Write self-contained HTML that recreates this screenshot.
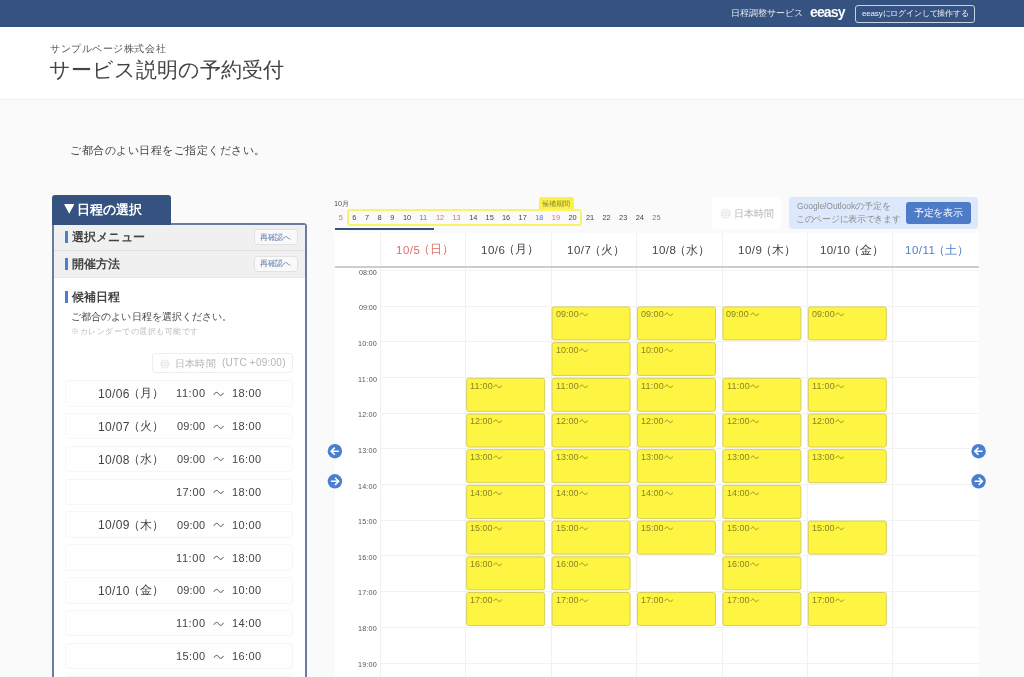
<!DOCTYPE html>
<html lang="ja"><head><meta charset="utf-8"><title>サービス説明の予約受付</title>
<style>
*{box-sizing:border-box;margin:0;padding:0}
html,body{width:1024px;height:677px;overflow:hidden}
body{position:relative;background:#fafafa;font-family:"Liberation Sans",sans-serif;color:#444}
#w{position:absolute;left:0;top:0;width:1024px;height:677px;overflow:hidden;will-change:transform}
.a{position:absolute;white-space:nowrap;line-height:1}
.cc{transform:translate(-50%,-50%)}
</style></head>
<body>
<div id="w">
<div class="a" style="left:0px;top:0px;width:1024px;height:27px;background:#365281"></div>
<div class="a" style="left:731px;top:9px;font-size:9px;color:#e4e9f1;letter-spacing:-0.03px">日程調整サービス</div>
<div class="a" style="left:810px;top:5px;font-size:14px;color:#fff;letter-spacing:-0.85px;font-weight:bold">eeasy</div>
<div class="a" style="left:855.4px;top:4.5px;width:119.5px;height:18px;border:1px solid #c9d2e0;border-radius:3px"></div>
<div class="a" style="left:862px;top:10px;font-size:8px;color:#eef1f6;letter-spacing:-0.16px">eeasyにログインして操作する</div>
<div class="a" style="left:0px;top:27px;width:1024px;height:73px;background:#fff;border-bottom:1px solid #eee"></div>
<div class="a" style="left:50px;top:44px;font-size:10px;color:#555;letter-spacing:0.56px">サンプルページ株式会社</div>
<div class="a" style="left:49px;top:59px;font-size:21px;color:#444;letter-spacing:-0.04px">サービス説明の予約受付</div>
<div class="a" style="left:70px;top:145px;font-size:11px;color:#444;letter-spacing:0.53px">ご都合のよい日程をご指定ください。</div>
<div class="a" style="left:52px;top:223px;width:255px;height:470px;background:#fff;border:2px solid #687da0;border-radius:0 3.5px 0 0"></div>
<div class="a" style="left:52px;top:195.3px;width:119px;height:29.7px;background:#365281;border-radius:3px 3px 0 0"></div>
<svg class="a" style="left:64px;top:204px" width="10.4" height="9.8" viewBox="0 0 10.4 9.8"><path d="M0 0H10.4L5.2 9.8Z" fill="#fff"/></svg>
<div class="a" style="left:77px;top:203px;font-size:13px;color:#fff;letter-spacing:-0.05px;font-weight:bold">日程の選択</div>
<div class="a" style="left:54px;top:225px;width:251px;height:25.5px;background:#f0f0f0;border-bottom:1px solid #e0e0e0"></div>
<div class="a" style="left:54px;top:250.5px;width:251px;height:27.3px;background:#f0f0f0;border-bottom:1px solid #e8e8e8"></div>
<div class="a" style="left:65.3px;top:231px;width:2.8px;height:12px;background:#4a7fd0"></div>
<div class="a" style="left:72px;top:231px;font-size:12px;color:#444;letter-spacing:0.16px;font-weight:bold">選択メニュー</div>
<div class="a" style="left:65.3px;top:257.6px;width:2.8px;height:12px;background:#4a7fd0"></div>
<div class="a" style="left:72px;top:258px;font-size:12px;color:#444;letter-spacing:0.06px;font-weight:bold">開催方法</div>
<div class="a" style="left:65.3px;top:291.4px;width:2.8px;height:12px;background:#4a7fd0"></div>
<div class="a" style="left:72px;top:291px;font-size:12px;color:#444;letter-spacing:0.06px;font-weight:bold">候補日程</div>
<div class="a" style="left:254.2px;top:228.8px;width:43.6px;height:16.6px;background:#f9f9f9;border:1px solid #e2e2e2;border-radius:3px"></div>
<div class="a" style="left:260px;top:234px;font-size:8px;color:#5a79a8;letter-spacing:-0.36px">再確認へ</div>
<div class="a" style="left:254.2px;top:255.6px;width:43.6px;height:16.6px;background:#f9f9f9;border:1px solid #e2e2e2;border-radius:3px"></div>
<div class="a" style="left:260px;top:260px;font-size:8px;color:#5a79a8;letter-spacing:-0.36px">再確認へ</div>
<div class="a" style="left:71px;top:312px;font-size:10px;color:#444;letter-spacing:0.10px">ご都合のよい日程を選択ください。</div>
<div class="a" style="left:71px;top:328px;font-size:8px;color:#bbb;letter-spacing:0.53px">※カレンダーでの選択も可能です</div>
<div class="a" style="left:152.4px;top:353.4px;width:140.6px;height:19.3px;border:1px solid #eee;border-radius:3px;background:#fff"></div>
<svg class="a" style="left:159.8px;top:358.5px" width="10" height="10" viewBox="0 0 20 20"><circle cx="10" cy="10" r="9" fill="#e4e4e4"/><g fill="none" stroke="#fff" stroke-width="1.2"><ellipse cx="10" cy="10" rx="4" ry="9"/><path d="M1 10H19M10 1V19M2.5 5.5H17.5M2.5 14.5H17.5"/></g></svg>
<div class="a" style="left:175px;top:359px;font-size:10px;color:#b4b4b4;letter-spacing:0.24px">日本時間</div>
<div class="a" style="left:222px;top:358px;font-size:10px;color:#b4b4b4;letter-spacing:0.24px">(UTC +09:00)</div>
<div class="a" style="left:65px;top:380.00px;width:228px;height:26.5px;border:1px solid #f6f6f6;border-radius:3px;background:#fefefe"></div>
<div class="a" style="left:98px;top:388px;font-size:12px;color:#444;letter-spacing:0.33px">10/06</div>
<div class="a" style="left:128px;top:388px;font-size:11.5px;color:#444">（月）</div>
<div class="a" style="left:176px;top:388px;font-size:11px;color:#444;letter-spacing:0.59px">11:00</div>
<svg class="a" style="left:213.3px;top:390.8px" width="11.4" height="5.7" viewBox="0 0 17 9"><path d="M1 6C3.4 1.2 6.4 1.2 8.5 4.5S13.6 7.8 16 3" fill="none" stroke="#444" stroke-width="1.4912280701754386"/></svg>
<div class="a" style="left:232px;top:388px;font-size:11px;color:#444;letter-spacing:0.37px">18:00</div>
<div class="a" style="left:65px;top:412.85px;width:228px;height:26.5px;border:1px solid #f6f6f6;border-radius:3px;background:#fefefe"></div>
<div class="a" style="left:98px;top:421px;font-size:12px;color:#444;letter-spacing:0.33px">10/07</div>
<div class="a" style="left:128px;top:421px;font-size:11.5px;color:#444">（火）</div>
<div class="a" style="left:177px;top:421px;font-size:11px;color:#444;letter-spacing:0.14px">09:00</div>
<svg class="a" style="left:213.3px;top:423.6px" width="11.4" height="5.7" viewBox="0 0 17 9"><path d="M1 6C3.4 1.2 6.4 1.2 8.5 4.5S13.6 7.8 16 3" fill="none" stroke="#444" stroke-width="1.4912280701754386"/></svg>
<div class="a" style="left:232px;top:421px;font-size:11px;color:#444;letter-spacing:0.37px">18:00</div>
<div class="a" style="left:65px;top:445.70px;width:228px;height:26.5px;border:1px solid #f6f6f6;border-radius:3px;background:#fefefe"></div>
<div class="a" style="left:98px;top:454px;font-size:12px;color:#444;letter-spacing:0.33px">10/08</div>
<div class="a" style="left:128px;top:454px;font-size:11.5px;color:#444">（水）</div>
<div class="a" style="left:177px;top:454px;font-size:11px;color:#444;letter-spacing:0.14px">09:00</div>
<svg class="a" style="left:213.3px;top:456.4px" width="11.4" height="5.7" viewBox="0 0 17 9"><path d="M1 6C3.4 1.2 6.4 1.2 8.5 4.5S13.6 7.8 16 3" fill="none" stroke="#444" stroke-width="1.4912280701754386"/></svg>
<div class="a" style="left:232px;top:454px;font-size:11px;color:#444;letter-spacing:0.37px">16:00</div>
<div class="a" style="left:65px;top:478.55px;width:228px;height:26.5px;border:1px solid #f6f6f6;border-radius:3px;background:#fefefe"></div>
<div class="a" style="left:176px;top:487px;font-size:11px;color:#444;letter-spacing:0.37px">17:00</div>
<svg class="a" style="left:213.3px;top:489.3px" width="11.4" height="5.7" viewBox="0 0 17 9"><path d="M1 6C3.4 1.2 6.4 1.2 8.5 4.5S13.6 7.8 16 3" fill="none" stroke="#444" stroke-width="1.4912280701754386"/></svg>
<div class="a" style="left:232px;top:487px;font-size:11px;color:#444;letter-spacing:0.37px">18:00</div>
<div class="a" style="left:65px;top:511.40px;width:228px;height:26.5px;border:1px solid #f6f6f6;border-radius:3px;background:#fefefe"></div>
<div class="a" style="left:98px;top:519px;font-size:12px;color:#444;letter-spacing:0.33px">10/09</div>
<div class="a" style="left:128px;top:520px;font-size:11.5px;color:#444">（木）</div>
<div class="a" style="left:177px;top:520px;font-size:11px;color:#444;letter-spacing:0.14px">09:00</div>
<svg class="a" style="left:213.3px;top:522.1px" width="11.4" height="5.7" viewBox="0 0 17 9"><path d="M1 6C3.4 1.2 6.4 1.2 8.5 4.5S13.6 7.8 16 3" fill="none" stroke="#444" stroke-width="1.4912280701754386"/></svg>
<div class="a" style="left:232px;top:520px;font-size:11px;color:#444;letter-spacing:0.37px">10:00</div>
<div class="a" style="left:65px;top:544.25px;width:228px;height:26.5px;border:1px solid #f6f6f6;border-radius:3px;background:#fefefe"></div>
<div class="a" style="left:176px;top:553px;font-size:11px;color:#444;letter-spacing:0.59px">11:00</div>
<svg class="a" style="left:213.3px;top:555.0px" width="11.4" height="5.7" viewBox="0 0 17 9"><path d="M1 6C3.4 1.2 6.4 1.2 8.5 4.5S13.6 7.8 16 3" fill="none" stroke="#444" stroke-width="1.4912280701754386"/></svg>
<div class="a" style="left:232px;top:553px;font-size:11px;color:#444;letter-spacing:0.37px">18:00</div>
<div class="a" style="left:65px;top:577.10px;width:228px;height:26.5px;border:1px solid #f6f6f6;border-radius:3px;background:#fefefe"></div>
<div class="a" style="left:98px;top:585px;font-size:12px;color:#444;letter-spacing:0.33px">10/10</div>
<div class="a" style="left:128px;top:585px;font-size:11.5px;color:#444">（金）</div>
<div class="a" style="left:177px;top:585px;font-size:11px;color:#444;letter-spacing:0.14px">09:00</div>
<svg class="a" style="left:213.3px;top:587.8px" width="11.4" height="5.7" viewBox="0 0 17 9"><path d="M1 6C3.4 1.2 6.4 1.2 8.5 4.5S13.6 7.8 16 3" fill="none" stroke="#444" stroke-width="1.4912280701754386"/></svg>
<div class="a" style="left:232px;top:585px;font-size:11px;color:#444;letter-spacing:0.37px">10:00</div>
<div class="a" style="left:65px;top:609.95px;width:228px;height:26.5px;border:1px solid #f6f6f6;border-radius:3px;background:#fefefe"></div>
<div class="a" style="left:176px;top:618px;font-size:11px;color:#444;letter-spacing:0.59px">11:00</div>
<svg class="a" style="left:213.3px;top:620.7px" width="11.4" height="5.7" viewBox="0 0 17 9"><path d="M1 6C3.4 1.2 6.4 1.2 8.5 4.5S13.6 7.8 16 3" fill="none" stroke="#444" stroke-width="1.4912280701754386"/></svg>
<div class="a" style="left:232px;top:618px;font-size:11px;color:#444;letter-spacing:0.37px">14:00</div>
<div class="a" style="left:65px;top:642.80px;width:228px;height:26.5px;border:1px solid #f6f6f6;border-radius:3px;background:#fefefe"></div>
<div class="a" style="left:176px;top:651px;font-size:11px;color:#444;letter-spacing:0.37px">15:00</div>
<svg class="a" style="left:213.3px;top:653.5px" width="11.4" height="5.7" viewBox="0 0 17 9"><path d="M1 6C3.4 1.2 6.4 1.2 8.5 4.5S13.6 7.8 16 3" fill="none" stroke="#444" stroke-width="1.4912280701754386"/></svg>
<div class="a" style="left:232px;top:651px;font-size:11px;color:#444;letter-spacing:0.37px">16:00</div>
<div class="a" style="left:65px;top:675.65px;width:228px;height:26.5px;border:1px solid #f6f6f6;border-radius:3px;background:#fefefe"></div>
<div class="a" style="left:334px;top:200px;font-size:7.4px;color:#555">10月</div>
<div class="a" style="left:539px;top:197px;width:35px;height:13.5px;background:#fbf14a;border-radius:2px 2px 0 0"></div>
<div class="a" style="left:542px;top:200px;font-size:7px;color:#8a8330;letter-spacing:0.12px">候補期間</div>
<div class="a" style="left:346.8px;top:209px;width:235.6px;height:16.6px;border:2px solid #f9f36a;border-radius:3.5px"></div>
<div class="a cc" style="left:340.9px;top:217.8px;font-size:7.4px;color:#d8706c">5</div>
<div class="a cc" style="left:354.4px;top:217.8px;font-size:7.4px;color:#444">6</div>
<div class="a cc" style="left:367px;top:217.8px;font-size:7.4px;color:#444">7</div>
<div class="a cc" style="left:379.6px;top:217.8px;font-size:7.4px;color:#444">8</div>
<div class="a cc" style="left:392.3px;top:217.8px;font-size:7.4px;color:#444">9</div>
<div class="a cc" style="left:407px;top:217.8px;font-size:7.4px;color:#444">10</div>
<div class="a cc" style="left:423.3px;top:217.8px;font-size:7.4px;color:#4a7fd0">11</div>
<div class="a cc" style="left:440px;top:217.8px;font-size:7.4px;color:#d8706c">12</div>
<div class="a cc" style="left:456.5px;top:217.8px;font-size:7.4px;color:#d8706c">13</div>
<div class="a cc" style="left:473.3px;top:217.8px;font-size:7.4px;color:#444">14</div>
<div class="a cc" style="left:489.7px;top:217.8px;font-size:7.4px;color:#444">15</div>
<div class="a cc" style="left:506px;top:217.8px;font-size:7.4px;color:#444">16</div>
<div class="a cc" style="left:522.7px;top:217.8px;font-size:7.4px;color:#444">17</div>
<div class="a cc" style="left:539.3px;top:217.8px;font-size:7.4px;color:#4a7fd0">18</div>
<div class="a cc" style="left:555.9px;top:217.8px;font-size:7.4px;color:#d8706c">19</div>
<div class="a cc" style="left:572.5px;top:217.8px;font-size:7.4px;color:#444">20</div>
<div class="a cc" style="left:590px;top:217.8px;font-size:7.4px;color:#444">21</div>
<div class="a cc" style="left:606.6px;top:217.8px;font-size:7.4px;color:#444">22</div>
<div class="a cc" style="left:623.2px;top:217.8px;font-size:7.4px;color:#444">23</div>
<div class="a cc" style="left:639.8px;top:217.8px;font-size:7.4px;color:#444">24</div>
<div class="a cc" style="left:656.4px;top:217.8px;font-size:7.4px;color:#4a7fd0">25</div>
<div class="a" style="left:334.8px;top:228px;width:99.6px;height:2px;background:#365281"></div>
<div class="a" style="left:711.7px;top:197.3px;width:69.8px;height:31.7px;background:#fff;border-radius:4px"></div>
<svg class="a" style="left:719.5px;top:207.7px" width="11.4" height="11.4" viewBox="0 0 20 20"><circle cx="10" cy="10" r="9" fill="#e4e4e4"/><g fill="none" stroke="#fff" stroke-width="1.2"><ellipse cx="10" cy="10" rx="4" ry="9"/><path d="M1 10H19M10 1V19M2.5 5.5H17.5M2.5 14.5H17.5"/></g></svg>
<div class="a" style="left:734px;top:209px;font-size:10px;color:#b4b4b4;letter-spacing:0.12px">日本時間</div>
<div class="a" style="left:789.4px;top:197.3px;width:189px;height:32.2px;background:#dce8fc;border-radius:4px"></div>
<div class="a" style="left:797px;top:202px;font-size:8.5px;color:#8e8e8e;letter-spacing:-0.06px">Google/Outlookの予定を</div>
<div class="a" style="left:796px;top:215px;font-size:8.5px;color:#8e8e8e;letter-spacing:-0.29px">このページに表示できます</div>
<div class="a" style="left:906px;top:202.3px;width:65.3px;height:22px;background:#4d7bc8;border-radius:3px"></div>
<div class="a" style="left:914px;top:208px;font-size:10px;color:#fff;letter-spacing:-0.26px">予定を表示</div>
<div class="a" style="left:334.8px;top:233px;width:644.2px;height:460px;background:#fff"></div>
<div class="a" style="left:380.00px;top:233px;width:1px;height:460px;background:#f1f1f1"></div>
<div class="a" style="left:465.40px;top:233px;width:1px;height:460px;background:#f1f1f1"></div>
<div class="a" style="left:550.80px;top:233px;width:1px;height:460px;background:#f1f1f1"></div>
<div class="a" style="left:636.20px;top:233px;width:1px;height:460px;background:#f1f1f1"></div>
<div class="a" style="left:721.60px;top:233px;width:1px;height:460px;background:#f1f1f1"></div>
<div class="a" style="left:807.00px;top:233px;width:1px;height:460px;background:#f1f1f1"></div>
<div class="a" style="left:892.40px;top:233px;width:1px;height:460px;background:#f1f1f1"></div>
<div class="a" style="left:334.8px;top:266.2px;width:644.2px;height:2px;background:#ccc"></div>
<div class="a" style="left:396px;top:245px;font-size:11.5px;color:#d8706c;letter-spacing:0.54px">10/5</div>
<div class="a" style="left:418px;top:244px;font-size:11.5px;color:#d8706c">（日）</div>
<div class="a" style="left:481px;top:245px;font-size:11.5px;color:#444;letter-spacing:0.54px">10/6</div>
<div class="a" style="left:503px;top:244px;font-size:11.5px;color:#444">（月）</div>
<div class="a" style="left:567px;top:245px;font-size:11.5px;color:#444;letter-spacing:0.54px">10/7</div>
<div class="a" style="left:589px;top:245px;font-size:11.5px;color:#444">（火）</div>
<div class="a" style="left:652px;top:245px;font-size:11.5px;color:#444;letter-spacing:0.54px">10/8</div>
<div class="a" style="left:674px;top:245px;font-size:11.5px;color:#444">（水）</div>
<div class="a" style="left:738px;top:245px;font-size:11.5px;color:#444;letter-spacing:0.54px">10/9</div>
<div class="a" style="left:760px;top:245px;font-size:11.5px;color:#444">（木）</div>
<div class="a" style="left:820px;top:245px;font-size:11.5px;color:#444;letter-spacing:0.26px">10/10</div>
<div class="a" style="left:848px;top:245px;font-size:11.5px;color:#444">（金）</div>
<div class="a" style="left:905px;top:245px;font-size:11.5px;color:#4a7fd0;letter-spacing:0.48px">10/11</div>
<div class="a" style="left:933px;top:245px;font-size:11.5px;color:#4a7fd0">（土）</div>
<div class="a" style="left:380.5px;top:269.80px;width:598.5px;height:1px;background:#f2f2f2"></div>
<div class="a" style="left:359px;top:269px;font-size:7.2px;color:#555;letter-spacing:-0.05px">08:00</div>
<div class="a" style="left:380.5px;top:305.50px;width:598.5px;height:1px;background:#f2f2f2"></div>
<div class="a" style="left:359px;top:304px;font-size:7.2px;color:#555;letter-spacing:-0.05px">09:00</div>
<div class="a" style="left:380.5px;top:341.20px;width:598.5px;height:1px;background:#f2f2f2"></div>
<div class="a" style="left:358px;top:340px;font-size:7.2px;color:#555;letter-spacing:0.18px">10:00</div>
<div class="a" style="left:380.5px;top:376.90px;width:598.5px;height:1px;background:#f2f2f2"></div>
<div class="a" style="left:358px;top:376px;font-size:7.2px;color:#555;letter-spacing:0.40px">11:00</div>
<div class="a" style="left:380.5px;top:412.60px;width:598.5px;height:1px;background:#f2f2f2"></div>
<div class="a" style="left:358px;top:411px;font-size:7.2px;color:#555;letter-spacing:0.18px">12:00</div>
<div class="a" style="left:380.5px;top:448.30px;width:598.5px;height:1px;background:#f2f2f2"></div>
<div class="a" style="left:358px;top:447px;font-size:7.2px;color:#555;letter-spacing:0.18px">13:00</div>
<div class="a" style="left:380.5px;top:484.00px;width:598.5px;height:1px;background:#f2f2f2"></div>
<div class="a" style="left:358px;top:483px;font-size:7.2px;color:#555;letter-spacing:0.18px">14:00</div>
<div class="a" style="left:380.5px;top:519.70px;width:598.5px;height:1px;background:#f2f2f2"></div>
<div class="a" style="left:358px;top:518px;font-size:7.2px;color:#555;letter-spacing:0.18px">15:00</div>
<div class="a" style="left:380.5px;top:555.40px;width:598.5px;height:1px;background:#f2f2f2"></div>
<div class="a" style="left:358px;top:554px;font-size:7.2px;color:#555;letter-spacing:0.18px">16:00</div>
<div class="a" style="left:380.5px;top:591.10px;width:598.5px;height:1px;background:#f2f2f2"></div>
<div class="a" style="left:358px;top:589px;font-size:7.2px;color:#555;letter-spacing:0.18px">17:00</div>
<div class="a" style="left:380.5px;top:626.80px;width:598.5px;height:1px;background:#f2f2f2"></div>
<div class="a" style="left:358px;top:625px;font-size:7.2px;color:#555;letter-spacing:0.18px">18:00</div>
<div class="a" style="left:380.5px;top:662.50px;width:598.5px;height:1px;background:#f2f2f2"></div>
<div class="a" style="left:358px;top:661px;font-size:7.2px;color:#555;letter-spacing:0.18px">19:00</div>
<div class="a" style="left:466px;top:377px;width:79.3px;height:34px;transform:translate(0.20px,0.80px);background:#fdf541;border:1px solid #d6ce5c;border-radius:2.5px"></div>
<div class="a" style="left:470px;top:382px;font-size:9px;color:#8a8326;letter-spacing:0.22px">11:00</div>
<svg class="a" style="left:493.4px;top:383.6px" width="9.4" height="4.7" viewBox="0 0 17 9"><path d="M1 6C3.4 1.2 6.4 1.2 8.5 4.5S13.6 7.8 16 3" fill="none" stroke="#8a8326" stroke-width="1.7180851063829785"/></svg>
<div class="a" style="left:466px;top:413px;width:79.3px;height:34px;transform:translate(0.20px,0.50px);background:#fdf541;border:1px solid #d6ce5c;border-radius:2.5px"></div>
<div class="a" style="left:470px;top:417px;font-size:9px;color:#8a8326">12:00</div>
<svg class="a" style="left:493.4px;top:419.2px" width="9.4" height="4.7" viewBox="0 0 17 9"><path d="M1 6C3.4 1.2 6.4 1.2 8.5 4.5S13.6 7.8 16 3" fill="none" stroke="#8a8326" stroke-width="1.7180851063829785"/></svg>
<div class="a" style="left:466px;top:449px;width:79.3px;height:34px;transform:translate(0.20px,0.20px);background:#fdf541;border:1px solid #d6ce5c;border-radius:2.5px"></div>
<div class="a" style="left:470px;top:453px;font-size:9px;color:#8a8326">13:00</div>
<svg class="a" style="left:493.4px;top:454.9px" width="9.4" height="4.7" viewBox="0 0 17 9"><path d="M1 6C3.4 1.2 6.4 1.2 8.5 4.5S13.6 7.8 16 3" fill="none" stroke="#8a8326" stroke-width="1.7180851063829785"/></svg>
<div class="a" style="left:466px;top:484px;width:79.3px;height:34px;transform:translate(0.20px,0.90px);background:#fdf541;border:1px solid #d6ce5c;border-radius:2.5px"></div>
<div class="a" style="left:470px;top:489px;font-size:9px;color:#8a8326">14:00</div>
<svg class="a" style="left:493.4px;top:490.6px" width="9.4" height="4.7" viewBox="0 0 17 9"><path d="M1 6C3.4 1.2 6.4 1.2 8.5 4.5S13.6 7.8 16 3" fill="none" stroke="#8a8326" stroke-width="1.7180851063829785"/></svg>
<div class="a" style="left:466px;top:520px;width:79.3px;height:34px;transform:translate(0.20px,0.60px);background:#fdf541;border:1px solid #d6ce5c;border-radius:2.5px"></div>
<div class="a" style="left:470px;top:524px;font-size:9px;color:#8a8326">15:00</div>
<svg class="a" style="left:493.4px;top:526.4px" width="9.4" height="4.7" viewBox="0 0 17 9"><path d="M1 6C3.4 1.2 6.4 1.2 8.5 4.5S13.6 7.8 16 3" fill="none" stroke="#8a8326" stroke-width="1.7180851063829785"/></svg>
<div class="a" style="left:466px;top:556px;width:79.3px;height:34px;transform:translate(0.20px,0.30px);background:#fdf541;border:1px solid #d6ce5c;border-radius:2.5px"></div>
<div class="a" style="left:470px;top:560px;font-size:9px;color:#8a8326">16:00</div>
<svg class="a" style="left:493.4px;top:562.1px" width="9.4" height="4.7" viewBox="0 0 17 9"><path d="M1 6C3.4 1.2 6.4 1.2 8.5 4.5S13.6 7.8 16 3" fill="none" stroke="#8a8326" stroke-width="1.7180851063829785"/></svg>
<div class="a" style="left:466px;top:592px;width:79.3px;height:34px;transform:translate(0.20px,0.00px);background:#fdf541;border:1px solid #d6ce5c;border-radius:2.5px"></div>
<div class="a" style="left:470px;top:596px;font-size:9px;color:#8a8326">17:00</div>
<svg class="a" style="left:493.4px;top:597.8px" width="9.4" height="4.7" viewBox="0 0 17 9"><path d="M1 6C3.4 1.2 6.4 1.2 8.5 4.5S13.6 7.8 16 3" fill="none" stroke="#8a8326" stroke-width="1.7180851063829785"/></svg>
<div class="a" style="left:551px;top:306px;width:79.3px;height:34px;transform:translate(0.60px,0.40px);background:#fdf541;border:1px solid #d6ce5c;border-radius:2.5px"></div>
<div class="a" style="left:556px;top:310px;font-size:9px;color:#8a8326;letter-spacing:0.03px">09:00</div>
<svg class="a" style="left:578.8px;top:312.1px" width="9.4" height="4.7" viewBox="0 0 17 9"><path d="M1 6C3.4 1.2 6.4 1.2 8.5 4.5S13.6 7.8 16 3" fill="none" stroke="#8a8326" stroke-width="1.7180851063829785"/></svg>
<div class="a" style="left:551px;top:342px;width:79.3px;height:34px;transform:translate(0.60px,0.10px);background:#fdf541;border:1px solid #d6ce5c;border-radius:2.5px"></div>
<div class="a" style="left:556px;top:346px;font-size:9px;color:#8a8326">10:00</div>
<svg class="a" style="left:578.8px;top:347.9px" width="9.4" height="4.7" viewBox="0 0 17 9"><path d="M1 6C3.4 1.2 6.4 1.2 8.5 4.5S13.6 7.8 16 3" fill="none" stroke="#8a8326" stroke-width="1.7180851063829785"/></svg>
<div class="a" style="left:551px;top:377px;width:79.3px;height:34px;transform:translate(0.60px,0.80px);background:#fdf541;border:1px solid #d6ce5c;border-radius:2.5px"></div>
<div class="a" style="left:556px;top:382px;font-size:9px;color:#8a8326;letter-spacing:0.22px">11:00</div>
<svg class="a" style="left:578.8px;top:383.6px" width="9.4" height="4.7" viewBox="0 0 17 9"><path d="M1 6C3.4 1.2 6.4 1.2 8.5 4.5S13.6 7.8 16 3" fill="none" stroke="#8a8326" stroke-width="1.7180851063829785"/></svg>
<div class="a" style="left:551px;top:413px;width:79.3px;height:34px;transform:translate(0.60px,0.50px);background:#fdf541;border:1px solid #d6ce5c;border-radius:2.5px"></div>
<div class="a" style="left:556px;top:417px;font-size:9px;color:#8a8326">12:00</div>
<svg class="a" style="left:578.8px;top:419.2px" width="9.4" height="4.7" viewBox="0 0 17 9"><path d="M1 6C3.4 1.2 6.4 1.2 8.5 4.5S13.6 7.8 16 3" fill="none" stroke="#8a8326" stroke-width="1.7180851063829785"/></svg>
<div class="a" style="left:551px;top:449px;width:79.3px;height:34px;transform:translate(0.60px,0.20px);background:#fdf541;border:1px solid #d6ce5c;border-radius:2.5px"></div>
<div class="a" style="left:556px;top:453px;font-size:9px;color:#8a8326">13:00</div>
<svg class="a" style="left:578.8px;top:454.9px" width="9.4" height="4.7" viewBox="0 0 17 9"><path d="M1 6C3.4 1.2 6.4 1.2 8.5 4.5S13.6 7.8 16 3" fill="none" stroke="#8a8326" stroke-width="1.7180851063829785"/></svg>
<div class="a" style="left:551px;top:484px;width:79.3px;height:34px;transform:translate(0.60px,0.90px);background:#fdf541;border:1px solid #d6ce5c;border-radius:2.5px"></div>
<div class="a" style="left:556px;top:489px;font-size:9px;color:#8a8326">14:00</div>
<svg class="a" style="left:578.8px;top:490.6px" width="9.4" height="4.7" viewBox="0 0 17 9"><path d="M1 6C3.4 1.2 6.4 1.2 8.5 4.5S13.6 7.8 16 3" fill="none" stroke="#8a8326" stroke-width="1.7180851063829785"/></svg>
<div class="a" style="left:551px;top:520px;width:79.3px;height:34px;transform:translate(0.60px,0.60px);background:#fdf541;border:1px solid #d6ce5c;border-radius:2.5px"></div>
<div class="a" style="left:556px;top:524px;font-size:9px;color:#8a8326">15:00</div>
<svg class="a" style="left:578.8px;top:526.4px" width="9.4" height="4.7" viewBox="0 0 17 9"><path d="M1 6C3.4 1.2 6.4 1.2 8.5 4.5S13.6 7.8 16 3" fill="none" stroke="#8a8326" stroke-width="1.7180851063829785"/></svg>
<div class="a" style="left:551px;top:556px;width:79.3px;height:34px;transform:translate(0.60px,0.30px);background:#fdf541;border:1px solid #d6ce5c;border-radius:2.5px"></div>
<div class="a" style="left:556px;top:560px;font-size:9px;color:#8a8326">16:00</div>
<svg class="a" style="left:578.8px;top:562.1px" width="9.4" height="4.7" viewBox="0 0 17 9"><path d="M1 6C3.4 1.2 6.4 1.2 8.5 4.5S13.6 7.8 16 3" fill="none" stroke="#8a8326" stroke-width="1.7180851063829785"/></svg>
<div class="a" style="left:551px;top:592px;width:79.3px;height:34px;transform:translate(0.60px,0.00px);background:#fdf541;border:1px solid #d6ce5c;border-radius:2.5px"></div>
<div class="a" style="left:556px;top:596px;font-size:9px;color:#8a8326">17:00</div>
<svg class="a" style="left:578.8px;top:597.8px" width="9.4" height="4.7" viewBox="0 0 17 9"><path d="M1 6C3.4 1.2 6.4 1.2 8.5 4.5S13.6 7.8 16 3" fill="none" stroke="#8a8326" stroke-width="1.7180851063829785"/></svg>
<div class="a" style="left:637px;top:306px;width:79.3px;height:34px;transform:translate(0.00px,0.40px);background:#fdf541;border:1px solid #d6ce5c;border-radius:2.5px"></div>
<div class="a" style="left:641px;top:310px;font-size:9px;color:#8a8326;letter-spacing:0.03px">09:00</div>
<svg class="a" style="left:664.2px;top:312.1px" width="9.4" height="4.7" viewBox="0 0 17 9"><path d="M1 6C3.4 1.2 6.4 1.2 8.5 4.5S13.6 7.8 16 3" fill="none" stroke="#8a8326" stroke-width="1.7180851063829785"/></svg>
<div class="a" style="left:637px;top:342px;width:79.3px;height:34px;transform:translate(0.00px,0.10px);background:#fdf541;border:1px solid #d6ce5c;border-radius:2.5px"></div>
<div class="a" style="left:641px;top:346px;font-size:9px;color:#8a8326">10:00</div>
<svg class="a" style="left:664.2px;top:347.9px" width="9.4" height="4.7" viewBox="0 0 17 9"><path d="M1 6C3.4 1.2 6.4 1.2 8.5 4.5S13.6 7.8 16 3" fill="none" stroke="#8a8326" stroke-width="1.7180851063829785"/></svg>
<div class="a" style="left:637px;top:377px;width:79.3px;height:34px;transform:translate(0.00px,0.80px);background:#fdf541;border:1px solid #d6ce5c;border-radius:2.5px"></div>
<div class="a" style="left:641px;top:382px;font-size:9px;color:#8a8326;letter-spacing:0.22px">11:00</div>
<svg class="a" style="left:664.2px;top:383.6px" width="9.4" height="4.7" viewBox="0 0 17 9"><path d="M1 6C3.4 1.2 6.4 1.2 8.5 4.5S13.6 7.8 16 3" fill="none" stroke="#8a8326" stroke-width="1.7180851063829785"/></svg>
<div class="a" style="left:637px;top:413px;width:79.3px;height:34px;transform:translate(0.00px,0.50px);background:#fdf541;border:1px solid #d6ce5c;border-radius:2.5px"></div>
<div class="a" style="left:641px;top:417px;font-size:9px;color:#8a8326">12:00</div>
<svg class="a" style="left:664.2px;top:419.2px" width="9.4" height="4.7" viewBox="0 0 17 9"><path d="M1 6C3.4 1.2 6.4 1.2 8.5 4.5S13.6 7.8 16 3" fill="none" stroke="#8a8326" stroke-width="1.7180851063829785"/></svg>
<div class="a" style="left:637px;top:449px;width:79.3px;height:34px;transform:translate(0.00px,0.20px);background:#fdf541;border:1px solid #d6ce5c;border-radius:2.5px"></div>
<div class="a" style="left:641px;top:453px;font-size:9px;color:#8a8326">13:00</div>
<svg class="a" style="left:664.2px;top:454.9px" width="9.4" height="4.7" viewBox="0 0 17 9"><path d="M1 6C3.4 1.2 6.4 1.2 8.5 4.5S13.6 7.8 16 3" fill="none" stroke="#8a8326" stroke-width="1.7180851063829785"/></svg>
<div class="a" style="left:637px;top:484px;width:79.3px;height:34px;transform:translate(0.00px,0.90px);background:#fdf541;border:1px solid #d6ce5c;border-radius:2.5px"></div>
<div class="a" style="left:641px;top:489px;font-size:9px;color:#8a8326">14:00</div>
<svg class="a" style="left:664.2px;top:490.6px" width="9.4" height="4.7" viewBox="0 0 17 9"><path d="M1 6C3.4 1.2 6.4 1.2 8.5 4.5S13.6 7.8 16 3" fill="none" stroke="#8a8326" stroke-width="1.7180851063829785"/></svg>
<div class="a" style="left:637px;top:520px;width:79.3px;height:34px;transform:translate(0.00px,0.60px);background:#fdf541;border:1px solid #d6ce5c;border-radius:2.5px"></div>
<div class="a" style="left:641px;top:524px;font-size:9px;color:#8a8326">15:00</div>
<svg class="a" style="left:664.2px;top:526.4px" width="9.4" height="4.7" viewBox="0 0 17 9"><path d="M1 6C3.4 1.2 6.4 1.2 8.5 4.5S13.6 7.8 16 3" fill="none" stroke="#8a8326" stroke-width="1.7180851063829785"/></svg>
<div class="a" style="left:637px;top:592px;width:79.3px;height:34px;transform:translate(0.00px,0.00px);background:#fdf541;border:1px solid #d6ce5c;border-radius:2.5px"></div>
<div class="a" style="left:641px;top:596px;font-size:9px;color:#8a8326">17:00</div>
<svg class="a" style="left:664.2px;top:597.8px" width="9.4" height="4.7" viewBox="0 0 17 9"><path d="M1 6C3.4 1.2 6.4 1.2 8.5 4.5S13.6 7.8 16 3" fill="none" stroke="#8a8326" stroke-width="1.7180851063829785"/></svg>
<div class="a" style="left:722px;top:306px;width:79.3px;height:34px;transform:translate(0.40px,0.40px);background:#fdf541;border:1px solid #d6ce5c;border-radius:2.5px"></div>
<div class="a" style="left:726px;top:310px;font-size:9px;color:#8a8326;letter-spacing:0.03px">09:00</div>
<svg class="a" style="left:749.6px;top:312.1px" width="9.4" height="4.7" viewBox="0 0 17 9"><path d="M1 6C3.4 1.2 6.4 1.2 8.5 4.5S13.6 7.8 16 3" fill="none" stroke="#8a8326" stroke-width="1.7180851063829785"/></svg>
<div class="a" style="left:722px;top:377px;width:79.3px;height:34px;transform:translate(0.40px,0.80px);background:#fdf541;border:1px solid #d6ce5c;border-radius:2.5px"></div>
<div class="a" style="left:727px;top:382px;font-size:9px;color:#8a8326;letter-spacing:0.22px">11:00</div>
<svg class="a" style="left:749.6px;top:383.6px" width="9.4" height="4.7" viewBox="0 0 17 9"><path d="M1 6C3.4 1.2 6.4 1.2 8.5 4.5S13.6 7.8 16 3" fill="none" stroke="#8a8326" stroke-width="1.7180851063829785"/></svg>
<div class="a" style="left:722px;top:413px;width:79.3px;height:34px;transform:translate(0.40px,0.50px);background:#fdf541;border:1px solid #d6ce5c;border-radius:2.5px"></div>
<div class="a" style="left:727px;top:417px;font-size:9px;color:#8a8326">12:00</div>
<svg class="a" style="left:749.6px;top:419.2px" width="9.4" height="4.7" viewBox="0 0 17 9"><path d="M1 6C3.4 1.2 6.4 1.2 8.5 4.5S13.6 7.8 16 3" fill="none" stroke="#8a8326" stroke-width="1.7180851063829785"/></svg>
<div class="a" style="left:722px;top:449px;width:79.3px;height:34px;transform:translate(0.40px,0.20px);background:#fdf541;border:1px solid #d6ce5c;border-radius:2.5px"></div>
<div class="a" style="left:727px;top:453px;font-size:9px;color:#8a8326">13:00</div>
<svg class="a" style="left:749.6px;top:454.9px" width="9.4" height="4.7" viewBox="0 0 17 9"><path d="M1 6C3.4 1.2 6.4 1.2 8.5 4.5S13.6 7.8 16 3" fill="none" stroke="#8a8326" stroke-width="1.7180851063829785"/></svg>
<div class="a" style="left:722px;top:484px;width:79.3px;height:34px;transform:translate(0.40px,0.90px);background:#fdf541;border:1px solid #d6ce5c;border-radius:2.5px"></div>
<div class="a" style="left:727px;top:489px;font-size:9px;color:#8a8326">14:00</div>
<svg class="a" style="left:749.6px;top:490.6px" width="9.4" height="4.7" viewBox="0 0 17 9"><path d="M1 6C3.4 1.2 6.4 1.2 8.5 4.5S13.6 7.8 16 3" fill="none" stroke="#8a8326" stroke-width="1.7180851063829785"/></svg>
<div class="a" style="left:722px;top:520px;width:79.3px;height:34px;transform:translate(0.40px,0.60px);background:#fdf541;border:1px solid #d6ce5c;border-radius:2.5px"></div>
<div class="a" style="left:727px;top:524px;font-size:9px;color:#8a8326">15:00</div>
<svg class="a" style="left:749.6px;top:526.4px" width="9.4" height="4.7" viewBox="0 0 17 9"><path d="M1 6C3.4 1.2 6.4 1.2 8.5 4.5S13.6 7.8 16 3" fill="none" stroke="#8a8326" stroke-width="1.7180851063829785"/></svg>
<div class="a" style="left:722px;top:556px;width:79.3px;height:34px;transform:translate(0.40px,0.30px);background:#fdf541;border:1px solid #d6ce5c;border-radius:2.5px"></div>
<div class="a" style="left:727px;top:560px;font-size:9px;color:#8a8326">16:00</div>
<svg class="a" style="left:749.6px;top:562.1px" width="9.4" height="4.7" viewBox="0 0 17 9"><path d="M1 6C3.4 1.2 6.4 1.2 8.5 4.5S13.6 7.8 16 3" fill="none" stroke="#8a8326" stroke-width="1.7180851063829785"/></svg>
<div class="a" style="left:722px;top:592px;width:79.3px;height:34px;transform:translate(0.40px,0.00px);background:#fdf541;border:1px solid #d6ce5c;border-radius:2.5px"></div>
<div class="a" style="left:727px;top:596px;font-size:9px;color:#8a8326">17:00</div>
<svg class="a" style="left:749.6px;top:597.8px" width="9.4" height="4.7" viewBox="0 0 17 9"><path d="M1 6C3.4 1.2 6.4 1.2 8.5 4.5S13.6 7.8 16 3" fill="none" stroke="#8a8326" stroke-width="1.7180851063829785"/></svg>
<div class="a" style="left:807px;top:306px;width:79.3px;height:34px;transform:translate(0.80px,0.40px);background:#fdf541;border:1px solid #d6ce5c;border-radius:2.5px"></div>
<div class="a" style="left:812px;top:310px;font-size:9px;color:#8a8326;letter-spacing:0.03px">09:00</div>
<svg class="a" style="left:835.0px;top:312.1px" width="9.4" height="4.7" viewBox="0 0 17 9"><path d="M1 6C3.4 1.2 6.4 1.2 8.5 4.5S13.6 7.8 16 3" fill="none" stroke="#8a8326" stroke-width="1.7180851063829785"/></svg>
<div class="a" style="left:807px;top:377px;width:79.3px;height:34px;transform:translate(0.80px,0.80px);background:#fdf541;border:1px solid #d6ce5c;border-radius:2.5px"></div>
<div class="a" style="left:812px;top:382px;font-size:9px;color:#8a8326;letter-spacing:0.22px">11:00</div>
<svg class="a" style="left:835.0px;top:383.6px" width="9.4" height="4.7" viewBox="0 0 17 9"><path d="M1 6C3.4 1.2 6.4 1.2 8.5 4.5S13.6 7.8 16 3" fill="none" stroke="#8a8326" stroke-width="1.7180851063829785"/></svg>
<div class="a" style="left:807px;top:413px;width:79.3px;height:34px;transform:translate(0.80px,0.50px);background:#fdf541;border:1px solid #d6ce5c;border-radius:2.5px"></div>
<div class="a" style="left:812px;top:417px;font-size:9px;color:#8a8326">12:00</div>
<svg class="a" style="left:835.0px;top:419.2px" width="9.4" height="4.7" viewBox="0 0 17 9"><path d="M1 6C3.4 1.2 6.4 1.2 8.5 4.5S13.6 7.8 16 3" fill="none" stroke="#8a8326" stroke-width="1.7180851063829785"/></svg>
<div class="a" style="left:807px;top:449px;width:79.3px;height:34px;transform:translate(0.80px,0.20px);background:#fdf541;border:1px solid #d6ce5c;border-radius:2.5px"></div>
<div class="a" style="left:812px;top:453px;font-size:9px;color:#8a8326">13:00</div>
<svg class="a" style="left:835.0px;top:454.9px" width="9.4" height="4.7" viewBox="0 0 17 9"><path d="M1 6C3.4 1.2 6.4 1.2 8.5 4.5S13.6 7.8 16 3" fill="none" stroke="#8a8326" stroke-width="1.7180851063829785"/></svg>
<div class="a" style="left:807px;top:520px;width:79.3px;height:34px;transform:translate(0.80px,0.60px);background:#fdf541;border:1px solid #d6ce5c;border-radius:2.5px"></div>
<div class="a" style="left:812px;top:524px;font-size:9px;color:#8a8326">15:00</div>
<svg class="a" style="left:835.0px;top:526.4px" width="9.4" height="4.7" viewBox="0 0 17 9"><path d="M1 6C3.4 1.2 6.4 1.2 8.5 4.5S13.6 7.8 16 3" fill="none" stroke="#8a8326" stroke-width="1.7180851063829785"/></svg>
<div class="a" style="left:807px;top:592px;width:79.3px;height:34px;transform:translate(0.80px,0.00px);background:#fdf541;border:1px solid #d6ce5c;border-radius:2.5px"></div>
<div class="a" style="left:812px;top:596px;font-size:9px;color:#8a8326">17:00</div>
<svg class="a" style="left:835.0px;top:597.8px" width="9.4" height="4.7" viewBox="0 0 17 9"><path d="M1 6C3.4 1.2 6.4 1.2 8.5 4.5S13.6 7.8 16 3" fill="none" stroke="#8a8326" stroke-width="1.7180851063829785"/></svg>
<svg class="a" style="left:326px;top:443px" width="17" height="17" viewBox="0 0 17 17"><g transform="translate(8.90 8.20) scale(.72)"><circle r="10" fill="#4a7fd0"/><path d="M5.5 0H-4.8M-.2 -5L-5.2 0L-.2 5" fill="none" stroke="#fff" stroke-width="2.2"/></g></svg>
<svg class="a" style="left:326px;top:473px" width="17" height="17" viewBox="0 0 17 17"><g transform="translate(8.90 8.30) scale(.72) rotate(180)"><circle r="10" fill="#4a7fd0"/><path d="M5.5 0H-4.8M-.2 -5L-5.2 0L-.2 5" fill="none" stroke="#fff" stroke-width="2.2"/></g></svg>
<svg class="a" style="left:970px;top:443px" width="17" height="17" viewBox="0 0 17 17"><g transform="translate(8.60 8.20) scale(.72)"><circle r="10" fill="#4a7fd0"/><path d="M5.5 0H-4.8M-.2 -5L-5.2 0L-.2 5" fill="none" stroke="#fff" stroke-width="2.2"/></g></svg>
<svg class="a" style="left:970px;top:473px" width="17" height="17" viewBox="0 0 17 17"><g transform="translate(8.60 8.30) scale(.72) rotate(180)"><circle r="10" fill="#4a7fd0"/><path d="M5.5 0H-4.8M-.2 -5L-5.2 0L-.2 5" fill="none" stroke="#fff" stroke-width="2.2"/></g></svg>
</div>
</body></html>
